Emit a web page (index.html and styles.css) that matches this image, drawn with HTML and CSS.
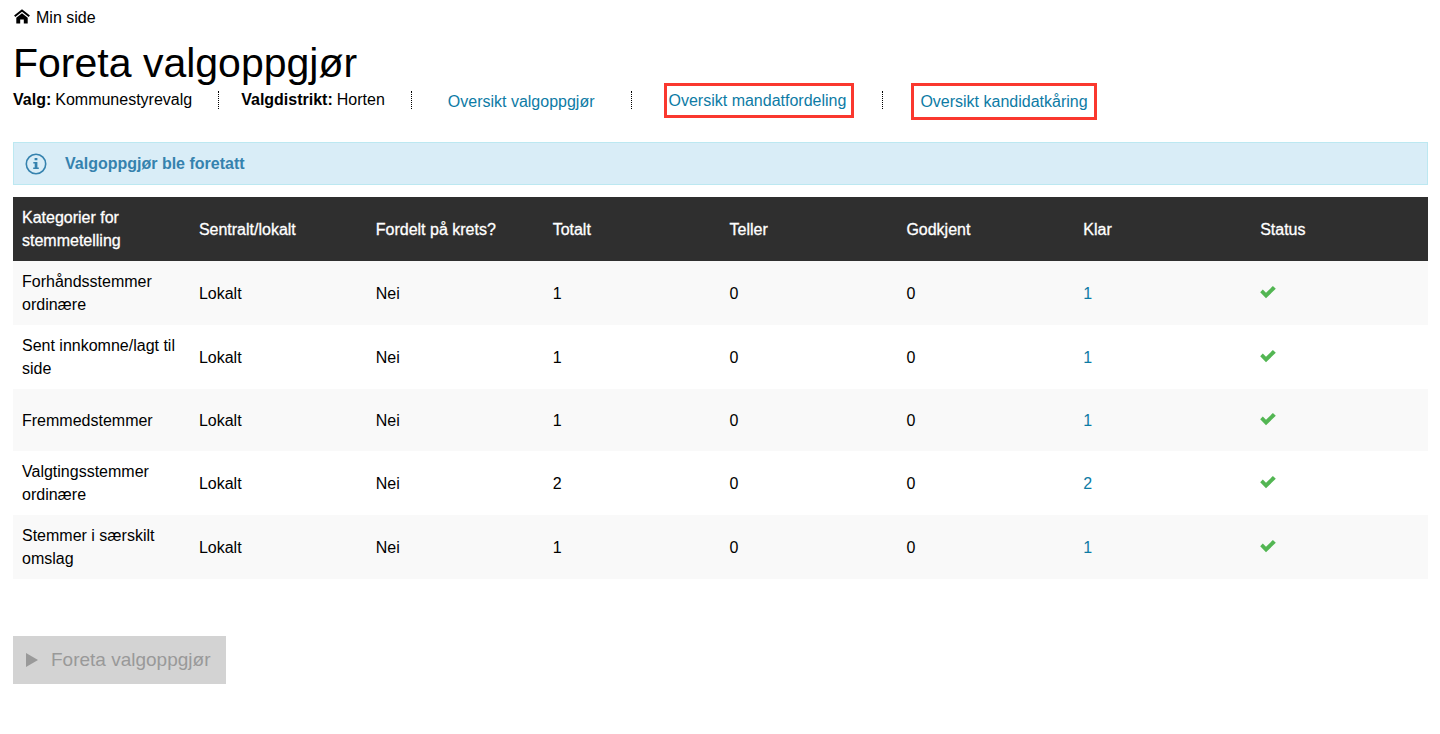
FILE: index.html
```
<!DOCTYPE html>
<html lang="no">
<head>
    <meta charset="UTF-8">
    <meta name="viewport" content="width=device-width, initial-scale=1.0">
    <title>Foreta valgoppgjør</title>
    <link rel="stylesheet" href="styles.css">
</head>
<body>
    <svg class="symbols" aria-hidden="true">
        <symbol id="check" viewBox="0 0 16 14">
            <path d="M0.2 6.2 2.8 3.6 6 6.8 12.9 0 15.8 2.7 6 12.2Z" fill="#53b653"/>
        </symbol>
    </svg>

    <nav class="breadcrumb">
        <a href="#">
            <svg class="icon-home" viewBox="0 0 16 17" aria-hidden="true">
                <path d="M0.7 7.3 8 1.5l7.3 5.8" fill="none" stroke="#000" stroke-width="2"/>
                <path d="M8 4.3l5.7 4.5V14.6H9.8v-4H6.2v4H2.3V8.8z" fill="#000"/>
            </svg>
            <span>Min side</span>
        </a>
    </nav>

    <main>
        <h1>Foreta valgoppgjør</h1>

        <ul class="meta">
            <li class="info"><strong>Valg:</strong> Kommunestyrevalg</li>
            <li class="info"><strong>Valgdistrikt:</strong> Horten</li>
            <li class="link"><a href="#">Oversikt valgoppgjør</a></li>
            <li class="link"><a class="marked" href="#">Oversikt mandatfordeling</a></li>
            <li class="link"><a class="marked wide" href="#">Oversikt kandidatkåring</a></li>
        </ul>

        <div class="alert" role="status">
            <svg class="icon-info" viewBox="0 0 22 22" aria-hidden="true">
                <circle cx="11" cy="11" r="9.7" fill="none" stroke="#3582ae" stroke-width="1.6"/>
                <path d="M9.6 5h2.8v2.3H9.6zM8.3 9h4.1v5.6h1.4v1.5H8.2v-1.5h1.5v-4.1H8.3z" fill="#3582ae"/>
            </svg>
            <span>Valgoppgjør ble foretatt</span>
        </div>

        <table>
            <thead>
                <tr>
                    <th scope="col">Kategorier for stemmetelling</th>
                    <th scope="col">Sentralt/lokalt</th>
                    <th scope="col">Fordelt på krets?</th>
                    <th scope="col">Totalt</th>
                    <th scope="col">Teller</th>
                    <th scope="col">Godkjent</th>
                    <th scope="col">Klar</th>
                    <th scope="col">Status</th>
                </tr>
            </thead>
            <tbody>
                <tr>
                    <td>Forhåndsstemmer ordinære</td>
                    <td>Lokalt</td>
                    <td>Nei</td>
                    <td>1</td>
                    <td>0</td>
                    <td>0</td>
                    <td><a href="#">1</a></td>
                    <td><svg class="icon-check" role="img" aria-label="Klar"><use href="#check"/></svg></td>
                </tr>
                <tr>
                    <td>Sent innkomne/lagt til side</td>
                    <td>Lokalt</td>
                    <td>Nei</td>
                    <td>1</td>
                    <td>0</td>
                    <td>0</td>
                    <td><a href="#">1</a></td>
                    <td><svg class="icon-check" role="img" aria-label="Klar"><use href="#check"/></svg></td>
                </tr>
                <tr>
                    <td>Fremmedstemmer</td>
                    <td>Lokalt</td>
                    <td>Nei</td>
                    <td>1</td>
                    <td>0</td>
                    <td>0</td>
                    <td><a href="#">1</a></td>
                    <td><svg class="icon-check" role="img" aria-label="Klar"><use href="#check"/></svg></td>
                </tr>
                <tr>
                    <td>Valgtingsstemmer ordinære</td>
                    <td>Lokalt</td>
                    <td>Nei</td>
                    <td>2</td>
                    <td>0</td>
                    <td>0</td>
                    <td><a href="#">2</a></td>
                    <td><svg class="icon-check" role="img" aria-label="Klar"><use href="#check"/></svg></td>
                </tr>
                <tr>
                    <td>Stemmer i særskilt omslag</td>
                    <td>Lokalt</td>
                    <td>Nei</td>
                    <td>1</td>
                    <td>0</td>
                    <td>0</td>
                    <td><a href="#">1</a></td>
                    <td><svg class="icon-check" role="img" aria-label="Klar"><use href="#check"/></svg></td>
                </tr>
            </tbody>
        </table>

        <button class="submit" type="button" disabled>
            <svg class="icon-play" viewBox="0 0 12 14" aria-hidden="true">
                <path d="M0 0l12 7-12 7z" fill="#999"/>
            </svg>
            <span>Foreta valgoppgjør</span>
        </button>
    </main>
</body>
</html>
```
FILE: styles.css
```
* {
    margin: 0;
    padding: 0;
    box-sizing: border-box;
}

body {
    font-family: "Liberation Sans", Arial, Helvetica, sans-serif;
    font-size: 16px;
    line-height: 23px;
    color: #000;
    background: #fff;
    padding: 6px 12px 24px 13px;
}

a {
    color: #0d7ba5;
    text-decoration: none;
}

a:hover {
    text-decoration: underline;
}

svg {
    display: block;
    flex: none;
}

.symbols {
    display: none;
}

.breadcrumb a {
    display: inline-flex;
    align-items: center;
    gap: 6px;
    padding-left: 1px;
    color: #000;
}

.icon-home {
    width: 16px;
    height: 17px;
}

h1 {
    font-size: 41px;
    font-weight: normal;
    line-height: 46px;
    margin-top: 8px;
}

/* Election info and links, split by dotted lines */
.meta {
    display: flex;
    align-items: center;
    list-style: none;
    height: 28px;
    margin-bottom: 28px;
    white-space: nowrap;
}

.meta li {
    display: flex;
    align-items: center;
    gap: 4px;
    height: 18px;
}

.meta li + li {
    border-left: 1px dotted #000;
}

.info {
    padding: 0 26px 2px 0;
}

.info + .info {
    padding-left: 22px;
}

.link {
    padding: 2px 36px 0;
}

.link:has(.marked) {
    padding: 0 28px 0 32px;
}

.marked {
    border: 3px solid #fa382e;
    padding: 3px 5px 3px 2px;
}

.marked.wide {
    padding: 4px 6px;
}

.link:last-child {
    padding: 2px 0 0 28px;
}

.alert {
    display: flex;
    align-items: center;
    gap: 18px;
    padding: 9px 11px;
    border: 1px solid #bce8f1;
    background: #d9edf7;
    color: #3582ae;
    font-weight: bold;
    margin-bottom: 12px;
}

.icon-info {
    width: 22px;
    height: 22px;
}

table {
    width: 100%;
    table-layout: fixed;
    border-collapse: collapse;
}

th,
td {
    height: 62px;
    padding: 9px;
    text-align: left;
    vertical-align: middle;
}

th {
    background: #2f2f2f;
    color: #fff;
    font-weight: normal;
    -webkit-text-stroke: 0.3px #fff;
}

tbody tr:nth-child(odd) {
    background: #f9f9f9;
}

.icon-check {
    width: 16px;
    height: 14px;
}

.submit {
    display: flex;
    align-items: center;
    gap: 13px;
    margin-top: 57px;
    padding: 12px 16px 12px 13px;
    border: none;
    background: #d3d3d3;
    color: #999;
    font-family: inherit;
    font-size: 19px;
    line-height: 24px;
}

.icon-play {
    width: 12px;
    height: 14px;
}
```
